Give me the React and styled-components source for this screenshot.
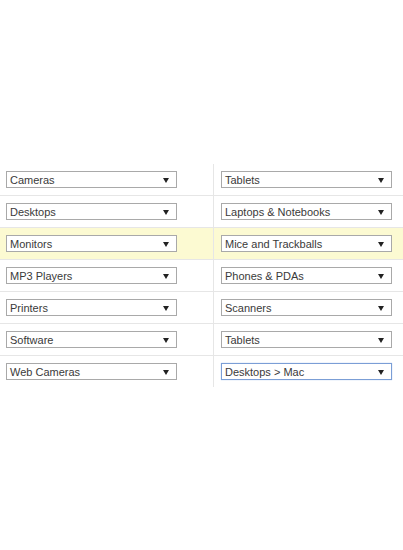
import React from "react";
import styled, { createGlobalStyle } from "styled-components";

const Global = createGlobalStyle`
    html, body {
        margin: 0;
        padding: 0;
        background: #ffffff;
    }
    body {
        font-family: "Liberation Sans", Arial, sans-serif;
    }
`;

const Page = styled.div`
    width: 403px;
    height: 550px;
    padding-top: 164px;
    box-sizing: border-box;
`;

const Table = styled.div`
    display: flex;
    flex-direction: column;
`;

const Row = styled.div`
    display: grid;
    grid-template-columns: 214px 1fr;
    height: 32px;
    box-sizing: border-box;
    border-bottom: 1px solid ${({ $last }) => ($last ? "transparent" : "#e6e6e6")};
    background: ${({ $highlight }) => ($highlight ? "#fcfad2" : "#ffffff")};
`;

const Cell = styled.div`
    display: flex;
    align-items: center;
    box-sizing: border-box;
    padding-left: ${({ $right }) => ($right ? "7px" : "6px")};
    border-right: ${({ $right }) => ($right ? "none" : "1px solid #e6e6e6")};
`;

const Select = styled.div`
    width: 171px;
    height: 17px;
    box-sizing: border-box;
    display: flex;
    align-items: center;
    justify-content: space-between;
    padding: 0 7px 0 3px;
    background: #ffffff;
    border: 1px solid ${({ $focused }) => ($focused ? "#7b9ed6" : "#a9a9a9")};
    box-shadow: ${({ $focused }) => ($focused ? "0 0 1px #a8c3ee" : "none")};
    font-size: 11px;
    color: #3a3a3a;
`;

const Arrow = styled.span`
    width: 0;
    height: 0;
    border-left: 3px solid transparent;
    border-right: 3px solid transparent;
    border-top: 5px solid #222222;
    margin-top: 1px;
`;

const rows = [
    ["Cameras", "Tablets"],
    ["Desktops", "Laptops & Notebooks"],
    ["Monitors", "Mice and Trackballs"],
    ["MP3 Players", "Phones & PDAs"],
    ["Printers", "Scanners"],
    ["Software", "Tablets"],
    ["Web Cameras", "Desktops > Mac"],
];

const Dropdown = ({ value, focused }) => (
    <Select $focused={focused}>
        <span>{value}</span>
        <Arrow />
    </Select>
);

const App = () => {
    return (
        <Page>
            <Global />
            <Table>
                {rows.map(([left, right], i) => (
                    <Row key={i} $highlight={i === 2} $last={i === rows.length - 1}>
                        <Cell>
                            <Dropdown value={left} />
                        </Cell>
                        <Cell $right>
                            <Dropdown value={right} focused={i === rows.length - 1} />
                        </Cell>
                    </Row>
                ))}
            </Table>
        </Page>
    );
};

export default App;
